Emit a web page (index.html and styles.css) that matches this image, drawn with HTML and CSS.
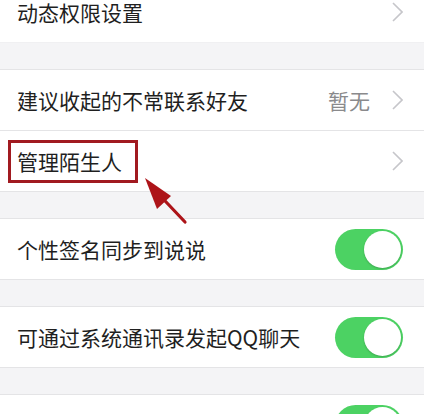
FILE: index.html
```html
<!DOCTYPE html>
<html lang="zh-CN">
<head>
<meta charset="utf-8">
<link rel="stylesheet" href="styles.css">
</head>
<body>
<div class="page">
  <section class="group first">
    <div class="row">
      <span class="label">动态权限设置</span>
      <span class="chev"><svg width="11" height="20" viewBox="0 0 11 20"><path d="M1 1 L10 10 L1 19" fill="none" stroke="#c6c6ca" stroke-width="1.6"/></svg></span>
    </div>
  </section>
  <div class="gap"></div>
  <section class="group">
    <div class="row">
      <span class="label">建议收起的不常联系好友</span>
      <span class="value">暂无</span>
      <span class="chev"><svg width="11" height="20" viewBox="0 0 11 20"><path d="M1 1 L10 10 L1 19" fill="none" stroke="#c6c6ca" stroke-width="1.6"/></svg></span>
    </div>
    <div class="row sep">
      <span class="label">管理陌生人</span>
      <span class="chev"><svg width="11" height="20" viewBox="0 0 11 20"><path d="M1 1 L10 10 L1 19" fill="none" stroke="#c6c6ca" stroke-width="1.6"/></svg></span>
      <span class="mark"></span>
    </div>
  </section>
  <div class="gap"></div>
  <section class="group">
    <div class="row">
      <span class="label">个性签名同步到说说</span>
      <span class="toggle"><span class="knob"></span></span>
    </div>
  </section>
  <div class="gap"></div>
  <section class="group">
    <div class="row">
      <span class="label">可通过系统通讯录发起QQ聊天</span>
      <span class="toggle"><span class="knob"></span></span>
    </div>
  </section>
  <div class="gap"></div>
  <section class="group">
    <div class="row">
      <span class="label">允许通过手机号查找我</span>
      <span class="toggle"><span class="knob"></span></span>
    </div>
  </section>
  <svg class="arrow" width="60" height="60" viewBox="0 0 60 60">
    <line x1="20" y1="20" x2="55" y2="57" stroke="#ad1419" stroke-width="3.2" stroke-linecap="round"/>
    <polygon points="15,13 41,31 27,44" fill="#ad1419"/>
  </svg>
</div>
</body>
</html>
```
FILE: styles.css
```css
html, body {
  margin: 0;
  padding: 0;
  background: #ffffff;
}
.page {
  position: relative;
  width: 424px;
  margin-top: -18px;
  background: #f4f4f6;
  font-family: "Noto Sans CJK SC", "Noto Sans", sans-serif;
}
.group {
  background: #ffffff;
  border-top: 1px solid #e4e4e6;
  border-bottom: 1px solid #e4e4e6;
}
.group.first {
  border-top: none;
  border-bottom-color: #f0f0f2;
}
.gap {
  height: 26px;
}
.row {
  position: relative;
  height: 60px;
  display: flex;
  align-items: center;
  padding: 0 21px 0 17px;
}
.row.sep {
  border-top: 1px solid #e4e4e6;
}
.label {
  flex: 1;
  font-size: 21px;
  color: #1f1f1f;
  letter-spacing: 0;
  white-space: nowrap;
}
.value {
  font-size: 21px;
  color: #8a8a8c;
  margin-right: 22px;
}
.chev {
  display: flex;
  align-items: center;
  width: 11px;
  height: 20px;
}
.toggle {
  position: relative;
  width: 68px;
  height: 41px;
  border-radius: 21px;
  background: #4cd263;
  margin-right: 0;
}
.knob {
  position: absolute;
  right: 2px;
  top: 2px;
  width: 37px;
  height: 37px;
  border-radius: 50%;
  background: #ffffff;
  box-shadow: 0 1px 2px rgba(0,0,0,0.2);
}
.mark {
  position: absolute;
  left: 8px;
  top: 9px;
  width: 124px;
  height: 37px;
  border: 3px solid #a11a20;
}
.arrow {
  position: absolute;
  left: 130px;
  top: 183px;
}
```
